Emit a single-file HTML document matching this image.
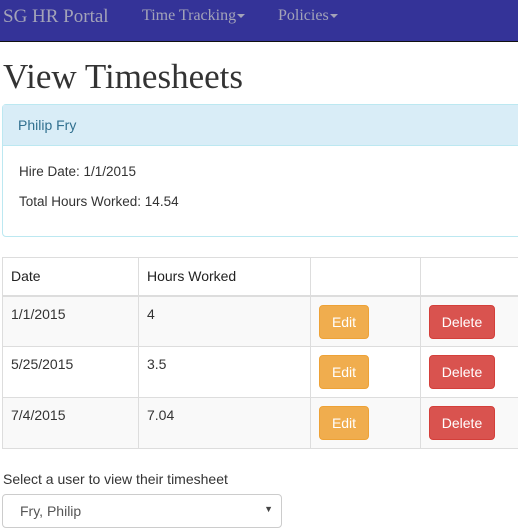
<!DOCTYPE html>
<html><head><style>
*{box-sizing:border-box;margin:0;padding:0}
body{width:518px;height:532px;overflow:hidden;background:#fff;font-family:"Liberation Sans",sans-serif;font-size:14px;color:#333;position:relative}
.nav{position:absolute;left:0;top:0;width:518px;height:42px;background:#343398;border-bottom:1px solid #111}
.nav span{position:absolute;color:#a3a3b8;font-family:"Liberation Serif",serif}
.caret{display:inline-block;border-top:4px solid #a3a3b8;border-left:4px solid transparent;border-right:4px solid transparent;vertical-align:middle;margin-left:1px}
h1{position:absolute;left:3px;top:57px;font-family:"Liberation Serif",serif;font-weight:normal;font-size:35px;color:#333}
.panel{position:absolute;left:2px;top:104px;width:530px;height:133px;border:1px solid #bce8f1;border-radius:4px}
.ph{height:41px;background:#d9edf7;border-bottom:1px solid #bce8f1;color:#31708f;padding:12px 15px;font-size:14px}
.p{position:absolute;left:16px;font-size:13.5px}
table{position:absolute;left:2px;top:257px;border-collapse:collapse;width:530px;table-layout:fixed}
td,th{border:1px solid #ddd;text-align:left;vertical-align:top;padding:9px 8px 0;font-size:14px;overflow:hidden}
th{height:38px;border-bottom:2px solid #ddd;padding-top:10px;font-weight:normal;color:#222}
tr.r td{height:51px}
tr.o td{background:#f9f9f9}
.b{display:inline-block;color:#fff;border-radius:4px;height:34px;line-height:32px;text-align:center;font-size:14px;margin-top:-1px}
.e{background:#f0ad4e;border:1px solid #eea236;width:50px}
.d{background:#d9534f;border:1px solid #d43f3a;width:66px}
</style></head><body>
<div class="nav">
<span style="left:3px;top:6px;font-size:19px">SG HR Portal</span>
<span style="left:142px;top:7px;font-size:16px">Time Tracking<i class="caret"></i></span>
<span style="left:278px;top:7px;font-size:16px">Policies<i class="caret"></i></span>
</div>
<h1>View Timesheets</h1>
<div class="panel"><div class="ph">Philip Fry</div>
<div class="p" style="top:59px">Hire Date: 1/1/2015</div>
<div class="p" style="top:89px">Total Hours Worked: 14.54</div></div>
<table>
<colgroup><col style="width:136px"><col style="width:172px"><col style="width:110px"><col></colgroup>
<tr><th>Date</th><th>Hours Worked</th><th></th><th></th></tr>
<tr class="o r"><td>1/1/2015</td><td>4</td><td><span class="b e">Edit</span></td><td><span class="b d">Delete</span></td></tr>
<tr class="r"><td>5/25/2015</td><td>3.5</td><td><span class="b e">Edit</span></td><td><span class="b d">Delete</span></td></tr>
<tr class="o r"><td>7/4/2015</td><td>7.04</td><td><span class="b e">Edit</span></td><td><span class="b d">Delete</span></td></tr>
</table>
<div style="position:absolute;left:3px;top:471px;font-size:14px">Select a user to view their timesheet</div>
<div style="position:absolute;left:2px;top:494px;width:280px;height:34px;border:1px solid #ccc;border-radius:4px;padding:8px 17px;color:#555">Fry, Philip<span style="position:absolute;right:8px;top:9px;font-size:9px;color:#444">▼</span></div>
</body></html>
